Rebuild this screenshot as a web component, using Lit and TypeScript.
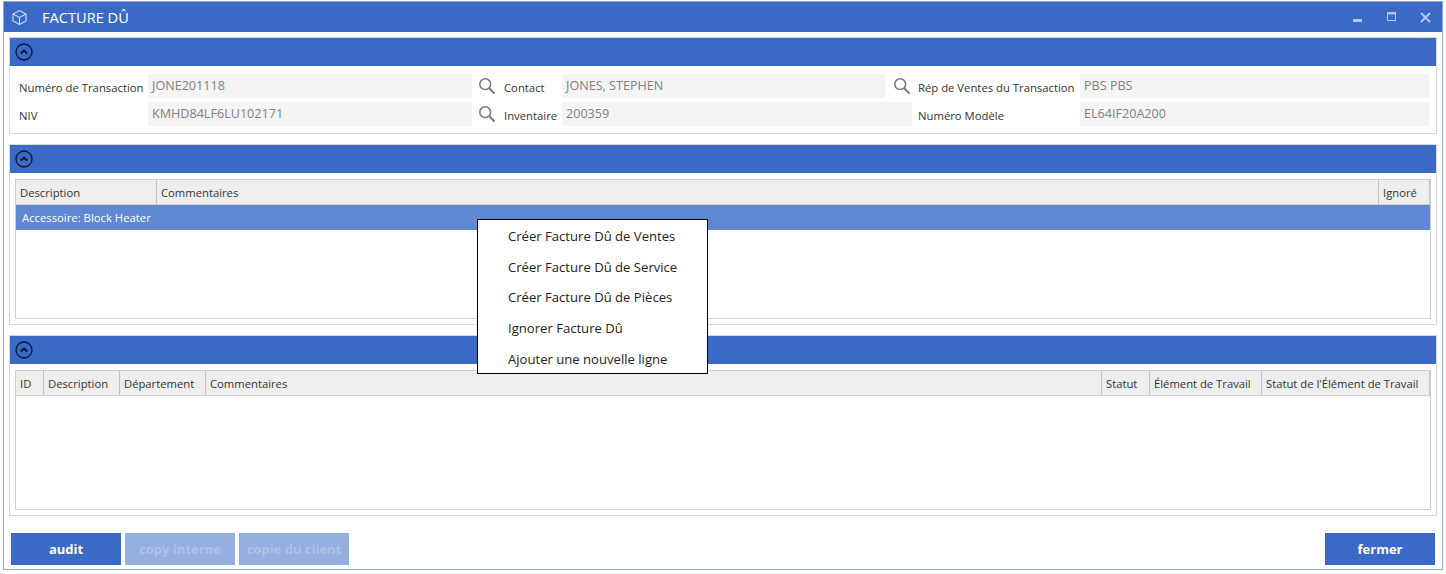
import { LitElement, html, css } from "lit";
import { customElement } from "lit/decorators.js";

const chevron = html`<svg class="chev" width="18" height="18" viewBox="0 0 18 18"><circle cx="9" cy="9" r="8" fill="none" stroke="#0b1530" stroke-width="1.3"/><path d="M5.8 10.6 9 7.6l3.2 3" fill="none" stroke="#0b1530" stroke-width="2.1"/></svg>`;
const search = html`<svg class="search" width="18" height="18" viewBox="0 0 18 18"><circle cx="7.2" cy="7.2" r="5.4" fill="none" stroke="#777" stroke-width="1.5"/><path d="M11 11l5.6 5.6" stroke="#777" stroke-width="2"/></svg>`;

@customElement("app-root")
export class AppRoot extends LitElement {
  static styles = css`
    :host { display: block; width: 1446px; height: 574px; background: #fff; font-family: "Open Sans", "Noto Sans", sans-serif; font-size: 11.3px; color: #333; overflow: hidden; position: relative; box-sizing: border-box; padding: 1px 3px 4px 3px; }
    .win { height: 569px; border: 1px solid #8fa8dc; display: flex; flex-direction: column; box-sizing: border-box; background: #fff; }
    .title { height: 30px; background: #3b6ac6; display: flex; align-items: center; color: #fff; flex: none; }
    .title .cube { margin-left: 7px; }
    .title .t { margin-left: 14px; font-size: 14.6px; }
    .ctl { margin-left: auto; display: flex; align-items: center; gap: 23.5px; padding-right: 11px; }
    .body { flex: 1; padding: 5px 5px 0 5px; display: flex; flex-direction: column; }
    .sec { border: 1px solid #d8d8d8; display: flex; flex-direction: column; box-sizing: border-box; flex: none; }
    .sec1 { height: 97px; margin-bottom: 10px; }
    .sec2 { height: 181px; margin-bottom: 10px; }
    .sec3 { height: 181px; }
    .hd { height: 28px; background: #3b6ac6; display: flex; align-items: center; padding-left: 5px; flex: none; }
    .fields { padding: 8px 7px 0 9px; display: grid; row-gap: 4px; }
    .row { display: flex; align-items: stretch; height: 24px; }
    .lbl { display: flex; align-items: flex-end; padding-bottom: 2px; line-height: 16px; white-space: nowrap; }
    .val { background: #f4f4f4; color: #808080; padding: 0 4px; display: flex; align-items: center; height: 24px; box-sizing: border-box; padding-bottom: 2px; font-size: 12.6px; }
    .ic { display: flex; align-items: center; padding-left: 6px; box-sizing: border-box; }
    .ic2 { padding-left: 8px; }
    .search { display: block; }
    .tb { margin: 6px 5px 5px 5px; flex: 1; border: 1px solid #d0d0d0; display: flex; flex-direction: column; }
    .th { display: flex; height: 25px; background: #eee; border-bottom: 1px solid #d0d0d0; box-sizing: border-box; flex: none; font-size: 11.25px; }
    .th div { padding-left: 4px; display: flex; align-items: center; border-right: 1px solid #c4c4c4; box-sizing: border-box; white-space: nowrap; flex: none; }
    .th div.grow { flex: 1; }
    .sel { height: 25px; background: #6087d2; color: #fff; display: flex; align-items: center; padding-left: 6px; box-sizing: border-box; }
    .foot { flex: 1; display: flex; align-items: flex-start; padding: 17px 2px 0 2px; gap: 4px; }
    .btn { width: 110px; height: 32px; background: #3b6ac6; color: #fff; font-weight: 700; font-size: 13px; display: flex; align-items: center; justify-content: center; white-space: nowrap; }
    .btn.off { background: #93aedf; color: #adc1e7; }
    .btn.end { margin-left: auto; }
    .menu { position: absolute; left: 477px; top: 219px; width: 231px; height: 155px; box-sizing: border-box; border: 1px solid #000; background: #fff; color: #222; font-size: 13.1px; padding-top: 1px; }
    .menu div { height: 30.6px; padding-left: 30px; display: flex; align-items: center; white-space: nowrap; }
  `;

  render() {
    return html`
      <div class="win">
        <div class="title">
          <svg class="cube" width="17" height="17" viewBox="0 0 17 17" fill="none" stroke="#cfdcf3" stroke-width="1.1"><path d="M8.5 1.5l6.5 3.5v7l-6.5 3.5L2 12V5z"/><path d="M2 5l6.5 3.5L15 5M8.5 8.5v7"/></svg>
          <span class="t">FACTURE DÛ</span>
          <div class="ctl">
            <svg width="10" height="10" viewBox="0 0 10 10"><rect x="0" y="7" width="9" height="3" fill="#b5c8ec"/></svg>
            <svg width="10" height="10" viewBox="0 0 10 10" fill="none" stroke="#b5c8ec"><rect x=".5" y=".5" width="8" height="8"/><rect x="0" y="0" width="9" height="2.5" fill="#b5c8ec" stroke="none"/></svg>
            <svg width="11" height="11" viewBox="0 0 11 11" stroke="#b5c8ec" stroke-width="2"><path d="M1 1l9 9M10 1l-9 9"/></svg>
          </div>
        </div>
        <div class="body">
          <div class="sec sec1">
            <div class="hd">${chevron}</div>
            <div class="fields">
              <div class="row">
                <span class="lbl" style="width:129px">Numéro de Transaction</span>
                <span class="val" style="width:324px">JONE201118</span>
                <span class="ic" style="width:32px">${search}</span>
                <span class="lbl" style="width:58px">Contact</span>
                <span class="val" style="width:323px">JONES, STEPHEN</span>
                <span class="ic ic2" style="width:33px">${search}</span>
                <span class="lbl" style="width:162px">Rép de Ventes du Transaction</span>
                <span class="val" style="width:349px">PBS PBS</span>
              </div>
              <div class="row">
                <span class="lbl" style="width:129px">NIV</span>
                <span class="val" style="width:324px">KMHD84LF6LU102171</span>
                <span class="ic" style="width:32px">${search}</span>
                <span class="lbl" style="width:58px">Inventaire</span>
                <span class="val" style="width:350px">200359</span>
                <span class="lbl" style="width:6px"></span>
                <span class="lbl" style="width:162px">Numéro Modèle</span>
                <span class="val" style="width:349px">EL64IF20A200</span>
              </div>
            </div>
          </div>
          <div class="sec sec2">
            <div class="hd">${chevron}</div>
            <div class="tb">
              <div class="th">
                <div style="width:141px">Description</div>
                <div class="grow">Commentaires</div>
                <div style="width:51px">Ignoré</div>
              </div>
              <div class="sel">Accessoire: Block Heater</div>
            </div>
          </div>
          <div class="sec sec3">
            <div class="hd">${chevron}</div>
            <div class="tb">
              <div class="th">
                <div style="width:28px">ID</div>
                <div style="width:76px">Description</div>
                <div style="width:86px">Département</div>
                <div class="grow">Commentaires</div>
                <div style="width:48px">Statut</div>
                <div style="width:112px">Élément de Travail</div>
                <div style="width:168px">Statut de l'Élément de Travail</div>
              </div>
            </div>
          </div>
          <div class="foot">
            <div class="btn">audit</div>
            <div class="btn off">copy interne</div>
            <div class="btn off">copie du client</div>
            <div class="btn end">fermer</div>
          </div>
        </div>
      </div>
      <div class="menu">
        <div>Créer Facture Dû de Ventes</div>
        <div>Créer Facture Dû de Service</div>
        <div>Créer Facture Dû de Pièces</div>
        <div>Ignorer Facture Dû</div>
        <div>Ajouter une nouvelle ligne</div>
      </div>
    `;
  }
}
